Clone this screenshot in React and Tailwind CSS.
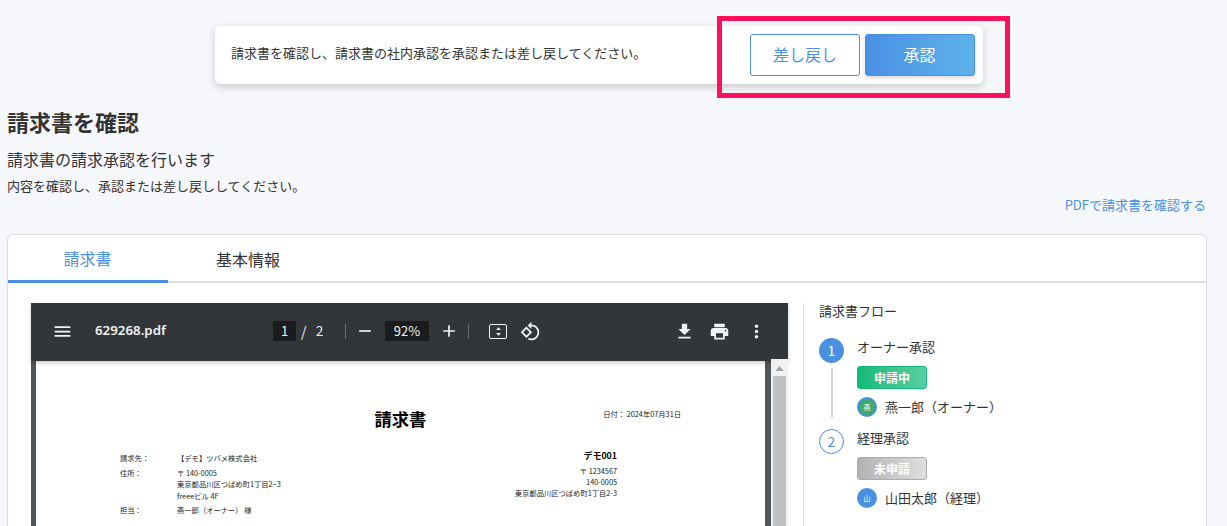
const P = ({ d, className }) => (
  <svg viewBox="0 0 24 24" fill="currentColor" className={className}><path d={d} /></svg>
);

const icons = {
  menu: "M3 18h18v-2H3v2zm0-5h18v-2H3v2zm0-7v2h18V6H3z",
  minus: "M19 13H5v-2h14v2z",
  plus: "M19 13h-6v6h-2v-6H5v-2h6V5h2v6h6v2z",
  rotate: "M7.34 6.41L.86 12.9l6.49 6.48 6.49-6.48-6.5-6.49zM3.69 12.9l3.66-3.66L11 12.9l-3.66 3.66-3.65-3.66zm15.67-6.26C17.61 4.88 15.3 4 13 4V.76L8.76 5 13 9.24V6c1.79 0 3.58.68 4.95 2.05 2.73 2.73 2.73 7.17 0 9.9C16.58 19.32 14.79 20 13 20c-.97 0-1.94-.21-2.84-.61l-1.49 1.49C10.02 21.62 11.51 22 13 22c2.3 0 4.61-.88 6.36-2.64 3.52-3.51 3.52-9.21 0-12.72z",
  download: "M19 9h-4V3H9v6H5l7 7 7-7zM5 18v2h14v-2H5z",
  print: "M19 8H5c-1.66 0-3 1.34-3 3v6h4v4h12v-4h4v-6c0-1.66-1.34-3-3-3zm-3 11H8v-5h8v5zm3-7c-.55 0-1-.45-1-1s.45-1 1-1 1 .45 1 1-.45 1-1 1zm-1-9H6v4h12V3z",
  more: "M12 8c1.1 0 2-.9 2-2s-.9-2-2-2-2 .9-2 2 .9 2 2 2zm0 2c-1.1 0-2 .9-2 2s.9 2 2 2 2-.9 2-2-.9-2-2-2zm0 6c-1.1 0-2 .9-2 2s.9 2 2 2 2-.9 2-2-.9-2-2-2z",
};

const Toolbar = () => (
  <div className="relative z-10 h-[58px] pb-[2px] bg-[#323639] text-[#f1f3f4] flex items-center shadow-[0_2px_4px_rgba(0,0,0,0.2)] text-[14px]">
    <P d={icons.menu} className="ml-[21px] w-[21px] h-[21px]" />
    <span className="ml-[22px] w-[178px] text-[13.3px] font-semibold" style={{ fontFamily: '"Noto Sans","Noto Sans CJK JP",sans-serif' }}>629268.pdf</span>
    <span className="w-[23px] h-[20px] bg-[#191b1c] flex items-center justify-center text-[13px]">1</span>
    <span className="ml-[5px] w-[6px] text-[14px]">/</span>
    <span className="ml-[9px] w-[8px] text-[13px]">2</span>
    <span className="ml-[21px] w-px h-[15px] bg-[#6b6e70]" />
    <P d={icons.minus} className="ml-[9px] w-[20px] h-[20px]" />
    <span className="ml-[10px] w-[44px] h-[20px] bg-[#191b1c] flex items-center justify-center text-[13px]">92%</span>
    <P d={icons.plus} className="ml-[10px] w-[20px] h-[20px]" />
    <span className="ml-[9px] w-px h-[15px] bg-[#6b6e70]" />
    <span className="ml-[20px] w-[18px] h-[15px] border-[1.5px] border-[#f1f3f4] rounded-[2px] flex items-center justify-center">
      <svg viewBox="0 0 10 12" className="w-[7px] h-[11px]" fill="currentColor"><path d="M5 0l3.5 4h-7zM5 12L1.5 8h7z" /></svg>
    </span>
    <P d={icons.rotate} className="ml-[13px] w-[21px] h-[21px]" />
    <P d={icons.download} className="ml-[133px] w-[21px] h-[21px]" />
    <P d={icons.print} className="ml-[14px] w-[21px] h-[21px]" />
    <P d={icons.more} className="ml-[16px] w-[21px] h-[21px]" />
  </div>
);

const InvoiceRow = ({ label, lines }) => (
  <div className="flex mb-[3px]">
    <span className="w-[57px]">{label}</span>
    <div className="flex flex-col leading-[11.5px]">
      {lines.map((l) => <span key={l}>{l}</span>)}
    </div>
  </div>
);

const PdfPage = () => (
  <div className="w-[729px] ml-[5px] bg-white h-[170px] text-[7.3px] text-[#222] px-[84px] pt-[40px] relative">
    <div className="flex items-start">
      <div className="flex-1" />
      <div className="text-[17.3px] font-bold text-black leading-[36px] w-[52px] whitespace-nowrap">請求書</div>
      <div className="flex-1 flex justify-end pt-[8px]">
        <span className="leading-[10px]">日付： 2024年07月31日</span>
      </div>
    </div>
    <div className="flex justify-between mt-[11px]">
      <div className="pt-[5px] leading-[11px]">
        <InvoiceRow label="請求先：" lines={["【デモ】ツバメ株式会社"]} />
        <InvoiceRow label="住所：" lines={["〒 140-0005", "東京都品川区つばめ町1丁目2−3", "freeeビル 4F"]} />
        <InvoiceRow label="担当：" lines={["燕一郎（オーナー） 様"]} />
      </div>
      <div className="text-right mr-[64px] leading-[11px]">
        <div className="text-[8.8px] font-bold text-black leading-[16px] mb-[2px]">デモ001</div>
        <div>〒 1234567</div>
        <div>140-0005</div>
        <div>東京都品川区つばめ町1丁目2-3</div>
      </div>
    </div>
  </div>
);

const PdfViewer = () => (
  <div className="w-[757px] shrink-0 bg-[#525659]">
    <Toolbar />
    <div className="flex">
      <PdfPage />
      <div className="relative z-20 ml-[6px] -mt-[2px] w-[17px] h-[172px] bg-[#f1f1f1] flex flex-col items-center">
        <svg viewBox="0 0 10 6" className="w-[9px] h-[5px] mt-[7px]" fill="#a3a3a3"><path d="M5 0l5 6H0z" /></svg>
        <div className="w-[13px] flex-1 mt-[5px] bg-[#c1c1c1]" />
      </div>
    </div>
  </div>
);

const Step = ({ n, active, label, badge, badgeClass, avatar, avatarClass, name, line }) => (
  <div className="flex relative">
    <div className="w-[38px] flex flex-col items-start shrink-0">
      <div className={`w-[25px] h-[25px] rounded-full flex items-center justify-center text-[14px] ${active ? "bg-[#4a90e2] text-white" : "bg-white border border-[#4a90e2] text-[#4a90e2]"}`}>{n}</div>
      {line && <div className="ml-[12px] mt-[5px] w-[2px] h-[49px] bg-[#d4d4d4]" />}
    </div>
    <div className="flex flex-col">
      <div className="text-[13px] leading-[17px]">{label}</div>
      <div className={`mt-[11px] w-[70px] h-[23px] rounded-[3px] flex items-center justify-center text-white text-[12px] font-bold border ${badgeClass}`}>{badge}</div>
      <div className="mt-[8px] flex items-center h-[20px]">
        <div className={`w-[20px] h-[20px] rounded-full border-2 border-[#4a90e2] flex items-center justify-center text-white text-[7px] ${avatarClass}`}>{avatar}</div>
        <span className="ml-[8px] text-[13px]">{name}</span>
      </div>
    </div>
  </div>
);

export default function App() {
  return (
    <div
      className="w-[1227px] h-[526px] overflow-hidden bg-[#f6f7fb] text-[#333] flex flex-col"
      style={{ fontFamily: '"Noto Sans CJK JP","Noto Sans",sans-serif' }}
    >
      <div className="relative ml-[215px] mt-[26px] w-[768px] h-[58px] shrink-0 bg-white rounded-[5px] shadow-[0_3px_8px_rgba(0,0,0,0.18)] flex items-center justify-between pl-[16px] pr-[8px]">
        <span className="text-[13px] pb-[4px]">請求書を確認し、請求書の社内承認を承認または差し戻してください。</span>
        <div className="flex gap-[5px]">
          <button className="w-[110px] h-[42px] pb-[3px] border border-[#4a90e2] rounded-[3px] bg-white text-[#4a90e2] text-[16px]">差し戻し</button>
          <button className="w-[110px] h-[42px] pb-[3px] pr-[1px] border border-[#4a90e2] rounded-[3px] bg-gradient-to-r from-[#4a90e2] to-[#5fb2eb] text-white text-[16px] shadow-[0_2px_4px_rgba(0,0,0,0.15)]">承認</button>
        </div>
        <div className="absolute left-[502px] -top-[10px] w-[293px] h-[82px] border-[5px] border-[#ff0f5c]" />
      </div>

      <div className="ml-[7px] w-[1200px] flex flex-col">
        <h1 className="mt-[21px] text-[22px] font-bold leading-[32px] text-[#333]">請求書を確認</h1>
        <p className="mt-[10px] text-[16px] leading-[24px]">請求書の請求承認を行います</p>
        <p className="mt-[6px] text-[13px] leading-[18px]">内容を確認し、承認または差し戻ししてください。</p>
        <a className="self-end mt-[1px] pr-[1px] text-[13px] leading-[18px] text-[#4a90e2]">PDFで請求書を確認する</a>

        <div className="mt-[20px] bg-white border border-[#ddd] rounded-[6px] h-[400px] shrink-0">
          <div className="flex h-[48px] border-b-2 border-[#ddd]">
            <div className="w-[160px] h-[48px] pr-[1px] border-b-[3px] border-[#4a90e2] text-[#4a90e2] text-[16px] flex items-center justify-center">請求書</div>
            <div className="w-[160px] h-[48px] text-[16px] flex items-center justify-center">基本情報</div>
          </div>
          <div className="flex pl-[23px] pt-[20px]">
            <PdfViewer />
            <div className="ml-[15px] border-l border-[#ddd] pl-[15px] w-[300px] h-[240px]">
              <div className="-mt-[1px] text-[13px] leading-[17px] mb-[19px]">請求書フロー</div>
              <Step n="1" active label="オーナー承認" badge="申請中" badgeClass="bg-gradient-to-r from-[#10b97a] to-[#55cf9f] border-[#10b97a]" avatar="燕" avatarClass="bg-[#3eaa6f]" name="燕一郎（オーナー）" line />
              <div className="mt-[12px]">
                <Step n="2" label="経理承認" badge="未申請" badgeClass="bg-gradient-to-r from-[#b3b3b3] to-[#dedede] border-[#aaa]" avatar="山" avatarClass="bg-[#4a90e2]" name="山田太郎（経理）" />
              </div>
            </div>
          </div>
        </div>
      </div>
    </div>
  );
}
